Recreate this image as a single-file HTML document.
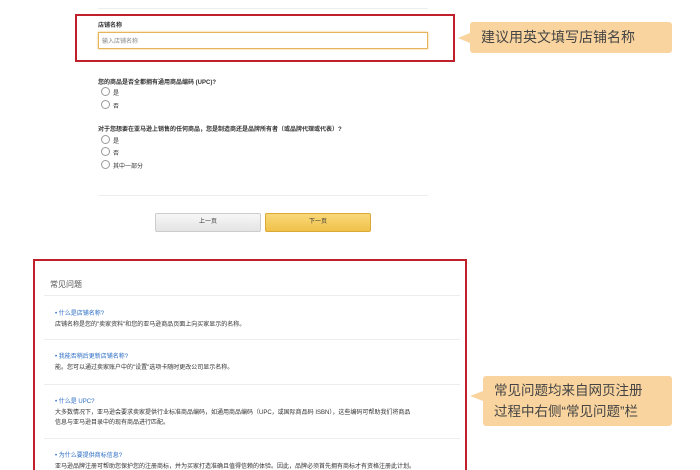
<!DOCTYPE html>
<html><head><meta charset="utf-8"><style>
html,body{margin:0;width:700px;height:470px;overflow:hidden}
body{background:#fff;position:relative;font-family:"Liberation Sans","Noto Sans CJK SC",sans-serif;color:#333}
.a{position:absolute;white-space:nowrap}
.s{font-size:6px;color:#333}
.r{width:7px;height:7px;border:1px solid #999;border-radius:50%;position:absolute;background:#fff}
.hl{position:absolute;height:1px;background:#eee}
.lk{color:#2a6cc4;font-size:6px}
.cb{position:absolute;background:#f9d49e;border-radius:3px;color:#444}
</style></head><body>
<div class="hl" style="left:98px;top:8px;width:330px"></div>
<div class="a" style="left:75px;top:14px;width:376px;height:44px;border:2px solid #c0202a"></div>
<div class="a s" style="left:98px;top:20px;font-weight:bold">店铺名称</div>
<div class="a" style="left:98px;top:32px;width:328px;height:15px;border:1px solid #e6b45a;background:#fff;box-shadow:0 0 2px #f0c070"></div>
<div class="a s" style="left:102px;top:36px;color:#888">输入店铺名称</div>
<div class="a s" style="left:98px;top:77px;font-weight:bold">您的商品是否全都拥有通用商品编码 (UPC)?</div>
<div class="r" style="left:101px;top:87px"></div><div class="a s" style="left:113px;top:88px">是</div>
<div class="r" style="left:101px;top:100px"></div><div class="a s" style="left:113px;top:101px">否</div>
<div class="a s" style="left:98px;top:124px;font-weight:bold">对于您想要在亚马逊上销售的任何商品，您是制造商还是品牌所有者（或品牌代理或代表）?</div>
<div class="r" style="left:101px;top:135px"></div><div class="a s" style="left:113px;top:136px">是</div>
<div class="r" style="left:101px;top:147px"></div><div class="a s" style="left:113px;top:148px">否</div>
<div class="r" style="left:101px;top:160px"></div><div class="a s" style="left:113px;top:161px">其中一部分</div>
<div class="hl" style="left:98px;top:195px;width:330px"></div>
<div class="a" style="left:155px;top:213px;width:104px;height:17px;border:1px solid #ccc;background:linear-gradient(#f7f7f7,#e4e4e4);border-radius:2px;font-size:6px;text-align:center;line-height:17px">上一页</div>
<div class="a" style="left:265px;top:213px;width:104px;height:17px;border:1px solid #d9a93a;background:linear-gradient(#f9d878,#f0c14b);border-radius:2px;font-size:6px;text-align:center;line-height:17px">下一页</div>
<div class="a" style="left:33px;top:259px;width:430px;height:209px;border:2px solid #c0202a;border-bottom:none"></div>
<div class="a" style="left:50px;top:279px;font-size:8px;color:#555">常见问题</div>
<div class="hl" style="left:44px;top:295px;width:416px"></div>
<div class="a lk" style="left:55px;top:308px">• 什么是店铺名称?</div>
<div class="a s" style="left:55px;top:319px">店铺名称是您的"卖家资料"和您的亚马逊商品页面上向买家显示的名称。</div>
<div class="hl" style="left:44px;top:339px;width:416px"></div>
<div class="a lk" style="left:55px;top:351px">• 我能否稍后更新店铺名称?</div>
<div class="a s" style="left:55px;top:362px">能。您可以通过卖家账户中的"设置"选项卡随时更改公司显示名称。</div>
<div class="hl" style="left:44px;top:384px;width:416px"></div>
<div class="a lk" style="left:55px;top:396px">• 什么是 UPC?</div>
<div class="a s" style="left:55px;top:407px">大多数情况下，亚马逊会要求卖家提供行业标准商品编码，如通用商品编码（UPC，或国际商品码 ISBN），这些编码可帮助我们将商品</div>
<div class="a s" style="left:55px;top:417px">信息与亚马逊目录中的现有商品进行匹配。</div>
<div class="hl" style="left:44px;top:438px;width:416px"></div>
<div class="a lk" style="left:55px;top:450px">• 为什么要提供商标信息?</div>
<div class="a s" style="left:55px;top:461px">亚马逊品牌注册可帮助您保护您的注册商标，并为买家打造准确且值得信赖的体验。因此，品牌必须首先拥有商标才有资格注册此计划。</div>
<div class="cb" style="left:470px;top:22px;width:202px;height:31px;line-height:31px;padding-left:11px;box-sizing:border-box;font-size:14px">建议用英文填写店铺名称</div>
<div class="a" style="left:458px;top:33px;width:0;height:0;border-top:5px solid transparent;border-bottom:5px solid transparent;border-right:12px solid #f9d49e"></div>
<div class="cb" style="left:483px;top:376px;width:189px;height:50px;line-height:21px;padding:4px 0 0 11px;box-sizing:border-box;font-size:13.5px">常见问题均来自网页注册<br>过程中右侧“常见问题”栏</div>
<div class="a" style="left:470px;top:391px;width:0;height:0;border-top:5px solid transparent;border-bottom:5px solid transparent;border-right:13px solid #f9d49e"></div>
</body></html>
